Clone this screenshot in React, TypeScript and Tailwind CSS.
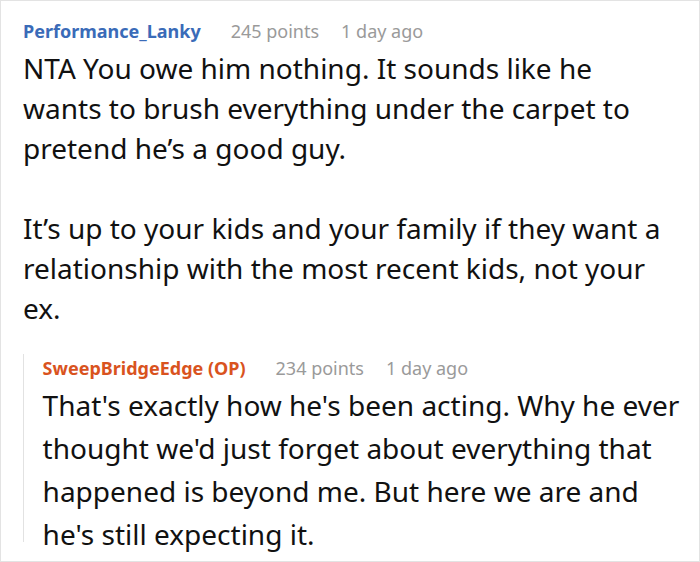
import React from 'react';

interface CommentProps {
  author: string;
  authorClass: string;
  points: number;
  time: string;
}

const CommentHeader: React.FC<CommentProps> = ({ author, authorClass, points, time }) => (
  <div className="flex items-baseline text-[18px] leading-[24px]">
    <span className={`font-bold ${authorClass}`}>{author}</span>
    <span className="ml-[30px] text-[#9a9a9a]">{points} points</span>
    <span className="ml-[22px] text-[#9a9a9a]">{time}</span>
  </div>
);

const App: React.FC = () => {
  return (
    <div
      className="w-[700px] h-[562px] bg-white border border-[#e3e3e3] overflow-hidden"
      style={{ fontFamily: '"Noto Sans", "Open Sans", sans-serif' }}
    >
      <div className="pl-[22px] pr-4 pt-[18px]">
        <CommentHeader
          author="Performance_Lanky"
          authorClass="text-[#3a6bb8]"
          points={245}
          time="1 day ago"
        />
        <div className="mt-[5px] max-w-[648px] text-[28px] leading-[40px] text-[#111]">
          <p>
            NTA You owe him nothing. It sounds like he wants to brush everything under the carpet to
            pretend he’s a good guy.
          </p>
          <p className="mt-[40px]">
            It’s up to your kids and your family if they want a relationship with the most recent
            kids, not your ex.
          </p>
        </div>

        {/* reply, indented behind a thin rule */}
        <div className="mt-[26px] flex">
          <div className="w-[2px] mb-[14px] bg-[#e2e2e2]" />
          <div className="pl-[19px] pt-[2px]">
            <CommentHeader
              author="SweepBridgeEdge (OP)"
              authorClass="text-[#d9531e]"
              points={234}
              time="1 day ago"
            />
            <p className="mt-[4px] text-[28px] leading-[43px] text-[#111] font-stretch-semi-condensed">
              That's exactly how he's been acting. Why he ever thought we'd just forget about
              everything that happened is beyond me. But here we are and he's still expecting it.
            </p>
          </div>
        </div>
      </div>
    </div>
  );
};

export default App;
